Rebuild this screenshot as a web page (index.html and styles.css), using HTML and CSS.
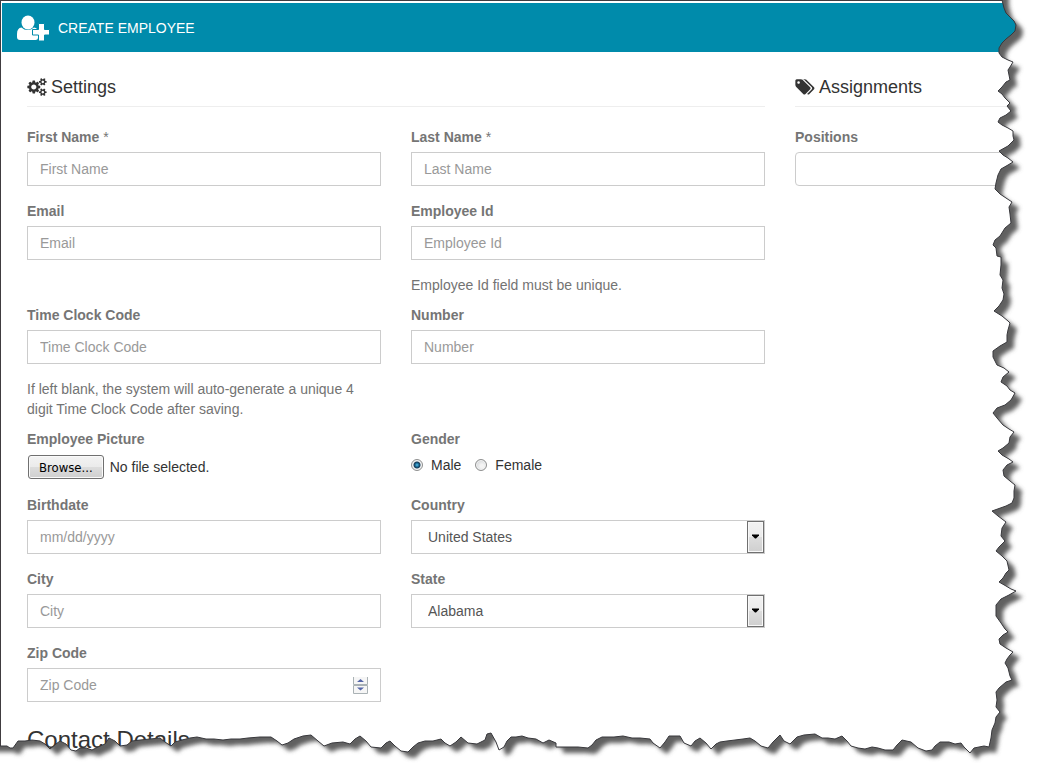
FILE: index.html
```html
<!DOCTYPE html>
<html lang="en">
<head>
    <meta charset="UTF-8">
    <meta name="viewport" content="width=device-width, initial-scale=1.0">
    <title>Create Employee</title>
    <link rel="stylesheet" href="styles.css">
</head>
<body>
    <div class="page">
        <header class="header">
            <svg class="header-icon" viewBox="0 0 34 26" aria-hidden="true">
                <path d="M5.500 12.500Q8 15 11.500 15T18 12.500Q22 13 22 17V23Q22 25 19.500 25H4Q1 25 1 22V19Q1 13 5.500 12.500Z"/>
                <ellipse cx="12" cy="7.500" rx="6.500" ry="7"/>
                <path class="plus" d="M22.500 8.500h6v6h5v5.500h-5v6h-6v-6h-6v-5.500h6z"/>
            </svg>
            <h1>CREATE EMPLOYEE</h1>
        </header>

        <form class="content">
            <section class="settings">
                <h2>
                    <svg class="icon" viewBox="0 0 1920 1792" aria-hidden="true"><path d="M896 896q0-106-75-181t-181-75-181 75-75 181 75 181 181 75 181-75 75-181zm768 512q0-52-38-90t-90-38-90 38-38 90q0 53 37.500 90.500t90.500 37.500 90.500-37.500 37.500-90.500zm0-1024q0-52-38-90t-90-38-90 38-38 90q0 53 37.500 90.500t90.500 37.500 90.500-37.500 37.500-90.500zm-384 421v185q0 10-7 19.500t-16 10.500l-155 24q-11 35-32 76 34 48 90 115 7 11 7 20 0 12-7 19-23 30-82.500 89.500t-78.500 59.500q-11 0-21-7l-115-90q-37 19-77 31-11 108-23 155-7 24-30 24h-186q-11 0-20-7.500t-10-17.500l-23-153q-34-10-75-31l-118 89q-7 7-20 7-11 0-21-8-144-133-144-160 0-9 7-19 10-14 41-53t47-61q-23-44-35-82l-152-24q-10-1-17-9.500t-7-19.500v-185q0-10 7-19.500t16-10.500l155-24q11-35 32-76-34-48-90-115-7-11-7-20 0-12 7-20 22-30 82-89t79-59q11 0 21 7l115 90q34-18 77-32 11-108 23-154 7-24 30-24h186q11 0 20 7.500t10 17.500l23 153q34 10 75 31l118-89q8-7 20-7 11 0 21 8 144 133 144 160 0 8-7 19-12 16-42 54t-45 60q23 48 34 82l152 23q10 2 17 10.500t7 19.500zm640 533v140q0 16-149 31-12 27-30 52 51 113 51 138 0 4-4 7-122 71-124 71-8 0-46-47t-52-68q-20 2-30 2t-30-2q-14 21-52 68t-46 47q-2 0-124-71-4-3-4-7 0-25 51-138-18-25-30-52-149-15-149-31v-140q0-16 149-31 13-29 30-52-51-113-51-138 0-4 4-7 4-2 35-20t59-34 30-16q8 0 46 46.500t52 67.500q20-2 30-2t30 2q51-71 92-112l6-2q4 0 124 70 4 3 4 7 0 25-51 138 17 23 30 52 149 15 149 31zm0-1024v140q0 16-149 31-12 27-30 52 51 113 51 138 0 4-4 7-122 71-124 71-8 0-46-47t-52-68q-20 2-30 2t-30-2q-14 21-52 68t-46 47q-2 0-124-71-4-3-4-7 0-25 51-138-18-25-30-52-149-15-149-31v-140q0-16 149-31 13-29 30-52-51-113-51-138 0-4 4-7 4-2 35-20t59-34 30-16q8 0 46 46.500t52 67.500q20-2 30-2t30 2q51-71 92-112l6-2q4 0 124 70 4 3 4 7 0 25-51 138 17 23 30 52 149 15 149 31z"/></svg>
                    Settings
                </h2>

                <div class="fields">
                    <div class="field">
                        <label for="firstName">First Name <span class="required">*</span></label>
                        <input class="control" type="text" id="firstName" placeholder="First Name">
                    </div>
                    <div class="field">
                        <label for="lastName">Last Name <span class="required">*</span></label>
                        <input class="control" type="text" id="lastName" placeholder="Last Name">
                    </div>

                    <div class="field">
                        <label for="email">Email</label>
                        <input class="control" type="email" id="email" placeholder="Email">
                    </div>
                    <div class="field">
                        <label for="employeeId">Employee Id</label>
                        <input class="control" type="text" id="employeeId" placeholder="Employee Id">
                        <p class="help">Employee Id field must be unique.</p>
                    </div>

                    <div class="field">
                        <label for="clockCode">Time Clock Code</label>
                        <input class="control" type="text" id="clockCode" placeholder="Time Clock Code">
                        <p class="help">If left blank, the system will auto-generate a unique 4 digit Time Clock Code after saving.</p>
                    </div>
                    <div class="field">
                        <label for="number">Number</label>
                        <input class="control" type="text" id="number" placeholder="Number">
                    </div>

                    <div class="field">
                        <label for="picture">Employee Picture</label>
                        <div class="file">
                            <input type="file" id="picture" hidden>
                            <button class="browse" type="button" id="browse">Browse...</button>
                            <span id="fileName">No file selected.</span>
                        </div>
                    </div>
                    <fieldset class="field">
                        <legend>Gender</legend>
                        <div class="radios">
                            <label><input type="radio" name="gender" checked> Male</label>
                            <label><input type="radio" name="gender"> Female</label>
                        </div>
                    </fieldset>

                    <div class="field">
                        <label for="birthdate">Birthdate</label>
                        <input class="control" type="text" id="birthdate" placeholder="mm/dd/yyyy">
                    </div>
                    <div class="field">
                        <label for="country">Country</label>
                        <div class="select">
                            <select class="control" id="country">
                                <option>United States</option>
                            </select>
                            <svg class="arrow" viewBox="0 0 9 5" aria-hidden="true"><path d="M1 0h7v1L5 4H4L1 1z"/></svg>
                        </div>
                    </div>

                    <div class="field">
                        <label for="city">City</label>
                        <input class="control" type="text" id="city" placeholder="City">
                    </div>
                    <div class="field">
                        <label for="state">State</label>
                        <div class="select">
                            <select class="control" id="state">
                                <option>Alabama</option>
                            </select>
                            <svg class="arrow" viewBox="0 0 9 5" aria-hidden="true"><path d="M1 0h7v1L5 4H4L1 1z"/></svg>
                        </div>
                    </div>

                    <div class="field">
                        <label for="zip">Zip Code</label>
                        <div class="number">
                            <input class="control" type="number" id="zip" placeholder="Zip Code">
                            <svg class="spinner" viewBox="0 0 15 18" aria-hidden="true">
                                <path class="spinner-box" d="M.5 1v7.500h14V1M.5 9.500h14v8H.5z"/>
                                <path d="M4 6h7L7.500 3zM4 11.500h7L7.500 14.500z"/>
                            </svg>
                        </div>
                    </div>
                </div>

                <h3>Contact Details</h3>
            </section>

            <section class="assignments">
                <h2>
                    <svg class="icon" viewBox="0 0 1920 1792" aria-hidden="true"><path d="M448 448q0-53-37.500-90.500t-90.500-37.500-90.500 37.500-37.500 90.500 37.500 90.500 90.500 37.500 90.500-37.500 37.500-90.500zm1067 576q0 53-37 90l-491 492q-39 37-91 37-53 0-90-37l-715-716q-38-37-64.500-101t-26.500-117v-416q0-52 38-90t90-38h416q53 0 117 26.500t102 64.500l715 714q37 39 37 91zm384 0q0 53-37 90l-491 492q-39 37-91 37-36 0-59-14t-53-45l470-470q37-37 37-90 0-52-37-91l-715-714q-38-38-102-64.500t-117-26.500h224q53 0 117 26.500t102 64.500l715 714q37 39 37 91z"/></svg>
                    Assignments
                </h2>
                <div class="field">
                    <label for="positions">Positions</label>
                    <input class="control rounded" type="text" id="positions">
                </div>
            </section>
        </form>

        <!-- Torn paper edge on the right and bottom -->
        <svg class="torn" viewBox="0 0 1038 777" preserveAspectRatio="none" aria-hidden="true">
            <defs>
                <path id="paper" d="M-20-20H1002L1002 0 1003 4 1004 8 1006 13 1010 17 1014 21 1016 25 1015 31 1011 35 1006 39 1002 43 999 48 999 53 1002 57 1008 60 1013 62 1010 67 1008 70 1009 75 1010 80 1006 82 1002 87 998 91 1002 94 1005 98 1010 103 1007 106 1011 111 1006 115 1000 118 998 122 1002 125 1008 128 1013 131 1013 136 1014 140 1008 146 999 151 1003 155 1008 158 1013 162 1008 165 1001 169 998 175 996 183 995 189 1000 194 1006 198 1012 202 1009 207 1010 214 1011 223 1005 228 1000 236 995 240 993 245 996 248 997 256 1001 257 1001 265 1000 275 1003 280 1002 288 1004 294 1003 300 999 306 994 311 1002 316 1008 321 1010 323 1008 330 1007 335 1007 342 1000 346 993 351 993 357 997 365 1004 368 1009 372 1003 377 1001 382 1007 386 1010 390 1015 393 1011 400 1005 405 997 408 993 413 997 418 1003 425 1009 429 1014 432 1010 437 1009 443 1003 448 998 451 1002 455 1009 459 1013 462 1007 465 1003 470 1004 476 1010 481 1015 485 1014 491 1014 498 1012 503 1006 506 992 511 998 516 1006 522 1002 528 1001 536 1005 541 999 547 996 551 1002 556 1007 561 1009 570 1006 573 1003 578 999 582 1006 586 1011 589 1016 591 1009 595 1001 599 996 605 996 616 1001 623 1005 629 1008 632 1003 635 999 639 1000 644 1006 648 1013 652 1010 655 1007 659 1005 663 1008 668 1010 676 1012 680 1006 682 999 688 996 692 997 700 996 707 1000 712 996 717 995 723 992 730 991 738 989 747 984 746 974 748 970 753 964 747 961 743 955 744 949 742 940 742 935 746 932 750 926 751 918 748 911 742 902 740 897 745 893 750 885 750 878 748 872 747 865 749 858 748 851 746 847 741 842 736 835 739 828 738 822 738 815 734 804 735 797 737 790 744 784 741 780 735 773 742 768 748 761 746 755 741 750 738 743 739 735 740 727 741 720 742 716 744 711 749 706 743 700 738 695 741 691 746 684 743 680 736 669 736 665 742 660 748 653 743 650 739 640 738 632 738 623 736 614 737 602 737 596 740 592 745 588 748 578 747 567 747 556 747 556 743 549 740 543 743 536 739 528 738 522 736 516 737 511 737 507 741 504 747 499 750 496 742 491 733 487 734 485 740 477 744 468 743 461 737 456 742 450 746 445 743 441 739 433 741 425 741 418 743 413 747 408 752 401 751 395 746 390 741 386 743 381 748 371 747 366 741 360 736 355 739 350 744 343 742 332 743 324 746 318 741 311 735 303 736 294 739 288 743 282 745 277 741 271 737 260 737 248 738 240 739 231 739 223 740 214 739 206 739 197 737 190 738 182 740 175 742 171 746 165 742 160 738 150 739 140 740 132 741 127 745 120 746 115 741 109 738 105 744 98 747 92 750 86 748 80 748 76 751 71 750 66 744 60 741 56 744 50 749 45 744 40 741 32 740 25 741 18 741 13 748 10 748 7 746 0 746H-20z"/>
                <mask id="outside" maskUnits="userSpaceOnUse" x="0" y="0" width="1038" height="777">
                    <rect width="1038" height="777" fill="#fff"/>
                    <use href="#paper" fill="#000"/>
                </mask>
                <filter id="soften" filterUnits="userSpaceOnUse" x="-20" y="-20" width="1078" height="817">
                    <feGaussianBlur stdDeviation="2"/>
                </filter>
            </defs>
            <g mask="url(#outside)">
                <rect width="1038" height="777" fill="#fff"/>
                <use href="#paper" x="7" y="6" fill="#606060" filter="url(#soften)"/>
            </g>
            <use class="torn-line" href="#paper"/>
        </svg>
    </div>

    <script>
        const picture = document.getElementById("picture");
        document.getElementById("browse").addEventListener("click", () => picture.click());
        picture.addEventListener("change", () => {
            document.getElementById("fileName").textContent = picture.files.length ? picture.files[0].name : "No file selected.";
        });
    </script>
</body>
</html>
```
FILE: styles.css
```css
* {
    margin: 0;
    padding: 0;
    box-sizing: border-box;
}
body {
    background-color: #fff;
    color: #333;
    font-family: 'Liberation Sans', Arial, sans-serif;
    font-size: 14px;
    line-height: 20px;
}
.page {
    position: relative;
    min-height: 100vh;
    overflow: hidden;
    padding: 3px 0 22px 2px;
    box-shadow: inset 1px 1px #403c40;
}
.header {
    display: flex;
    align-items: center;
    gap: 8px;
    height: 49px;
    padding: 0 14px;
    background-color: #008bab;
    color: #fff;
}
.header-icon {
    width: 34px;
    height: 26px;
    fill: #fff;
}
.header-icon .plus {
    stroke: #008bab;
    stroke-width: 1;
}
h1 {
    font-size: 14px;
    font-weight: normal;
}
.content {
    display: grid;
    grid-template-columns: 82fr 27fr;
    gap: 30px;
    padding: 25px 0 0 25px;
}
h2 {
    display: flex;
    align-items: center;
    gap: 4px;
    height: 30px;
    padding-bottom: 10px;
    margin-bottom: 20px;
    border-bottom: 1px solid #eee;
    font-size: 18px;
    font-weight: normal;
}
.icon {
    width: 20px;
    height: 18px;
    fill: #333;
}
.fields {
    display: grid;
    grid-template-columns: 1fr 1fr;
    column-gap: 30px;
}
.field {
    min-width: 0;
    padding-bottom: 15px;
    border: none;
}
.field > label, legend {
    display: block;
    margin-bottom: 5px;
    color: #757575;
    font-weight: bold;
}
.required {
    font-weight: normal;
}
.control {
    display: block;
    width: 100%;
    height: 34px;
    padding: 6px 12px;
    background-color: #fff;
    border: 1px solid #ccc;
    border-radius: 0;
    color: #555;
    font: inherit;
    outline: none;
}
.control:focus {
    border-color: #008bab;
}
.control::placeholder {
    color: #999;
}
.rounded {
    border-radius: 4px;
}
.help {
    margin: 15px 0 -5px;
    color: #737373;
}

/* File picker */
.file {
    display: flex;
    align-items: center;
    gap: 6px;
    height: 26px;
    padding-left: 1px;
}
.browse {
    height: 24px;
    padding: 0 10px;
    background: linear-gradient(#f3f3f3, #ebebeb 50%, #ddd 50%, #cfcfcf);
    border: 1px solid #707070;
    border-radius: 3px;
    box-shadow: inset 0 0 0 1px #fafafa;
    color: #000;
    font-family: 'DejaVu Sans Condensed', Tahoma, sans-serif;
    font-size: 13px;
}

/* Gender */
.radios {
    display: flex;
    gap: 14px;
    padding-top: 1px;
}
.radios label {
    display: flex;
    align-items: center;
    gap: 8px;
}
.radios input {
    appearance: none;
    width: 12px;
    height: 12px;
    border: 1px solid #8e8f8f;
    border-radius: 50%;
    background: radial-gradient(circle at 60% 60%, #f4f4f4 20%, #c4c8cc);
    box-shadow: inset 0 0 0 1px #f4f4f4;
}
.radios input:checked {
    background: radial-gradient(circle, #5bc3ea 0, #14618c 2px, #1b3c56 3px, #e8ecef 4px);
}

/* Drop-downs */
.select, .number {
    position: relative;
}
.select .control {
    appearance: none;
    padding: 6px 34px 6px 16px;
}
.arrow {
    position: absolute;
    top: 1px;
    right: 1px;
    width: 17px;
    height: 32px;
    padding: 0 3px;
    background: linear-gradient(#f2f2f2, #ebebeb 50%, #ddd 50%, #cfcfcf);
    border: 1px solid #707070;
    box-shadow: inset 0 0 0 1px #f8f8f8;
    pointer-events: none;
}

/* Zip code */
.number .control {
    appearance: textfield;
}
.number .control::-webkit-inner-spin-button {
    appearance: none;
}
.spinner {
    position: absolute;
    top: 8px;
    right: 13px;
    width: 15px;
    height: 18px;
    fill: #5566a8;
    pointer-events: none;
}
.spinner-box {
    fill: #f6f6f6;
    stroke: #aab2b5;
}
h3 {
    margin-top: 10px;
    font-size: 24px;
    font-weight: normal;
    line-height: 26px;
}

.torn {
    position: absolute;
    top: 0;
    left: 0;
    width: 100%;
    height: 100%;
    pointer-events: none;
}
.torn-line {
    fill: none;
    stroke: #38383c;
    stroke-width: 1;
    vector-effect: non-scaling-stroke;
}
```
